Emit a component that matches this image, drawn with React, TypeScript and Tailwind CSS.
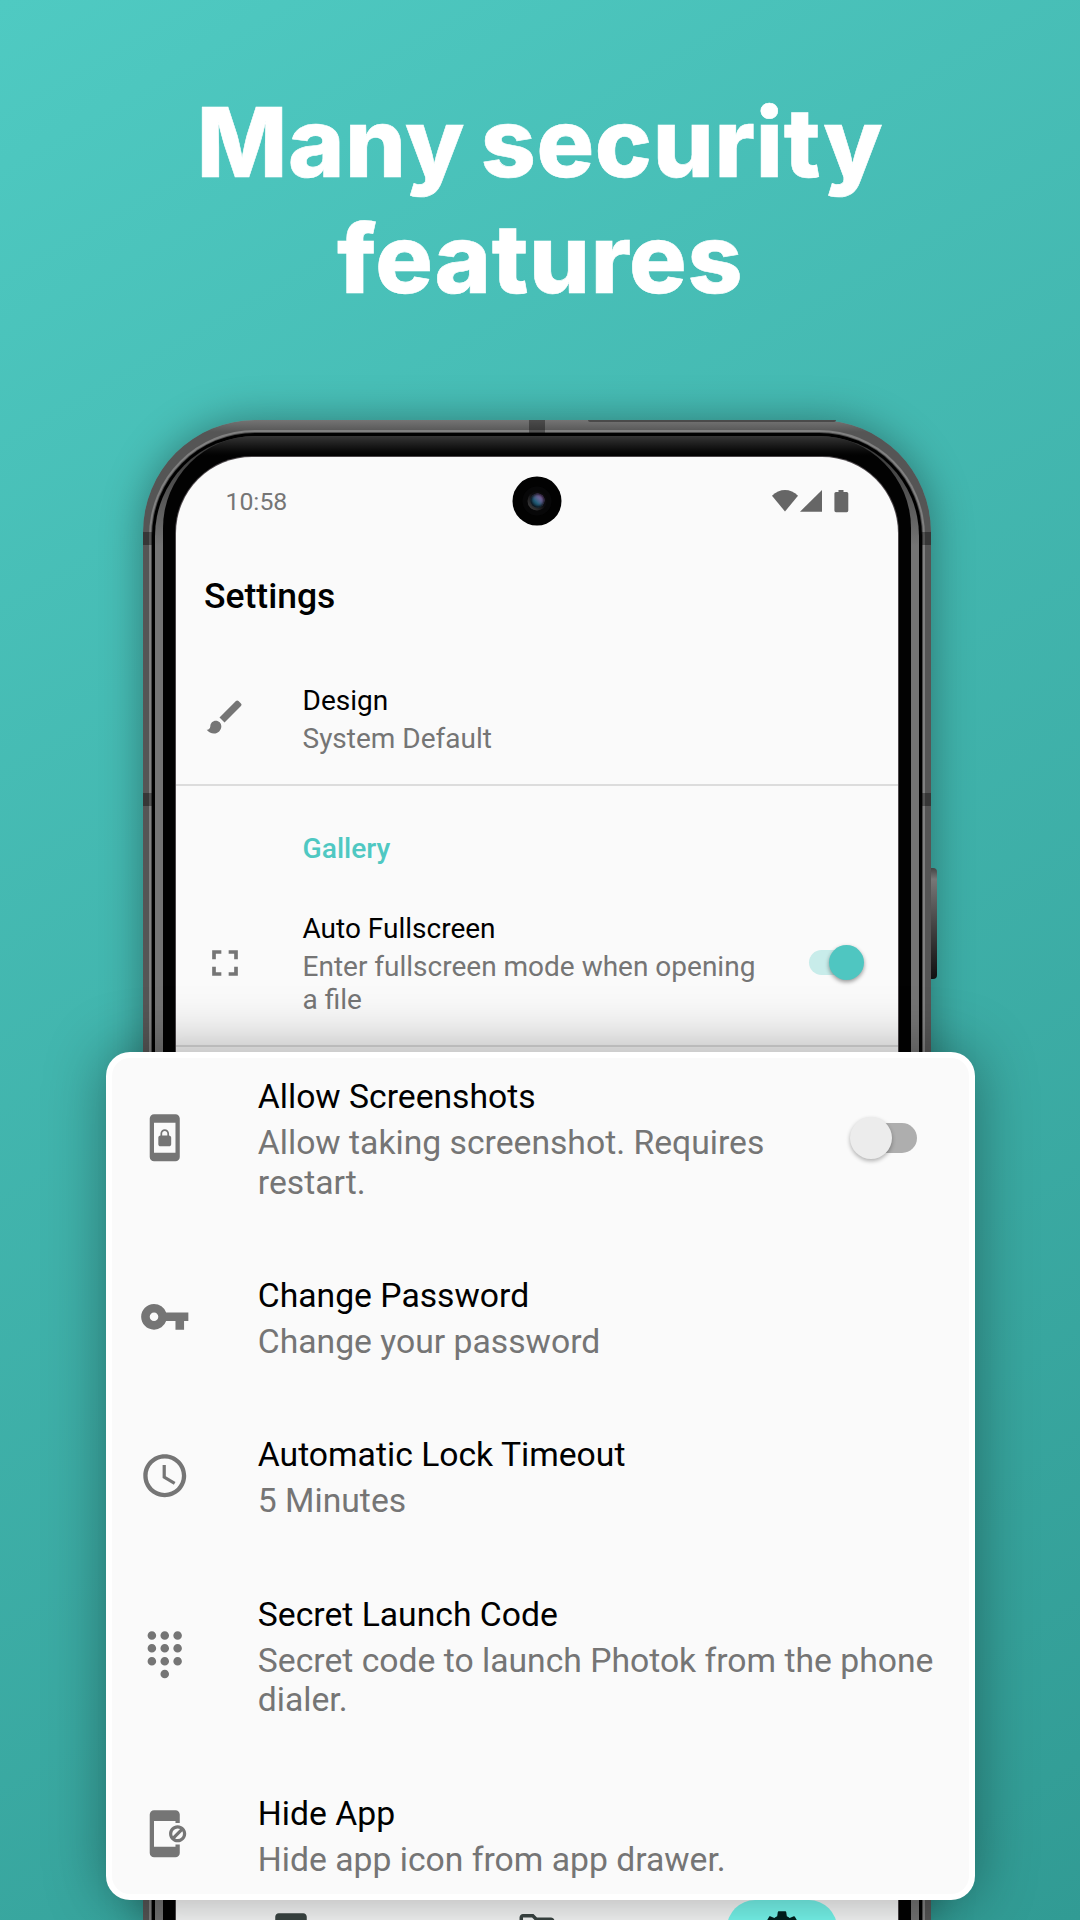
import React from "react";
import {
  MdAccessTime,
  MdAppBlocking,
  MdBrush,
  MdDialpad,
  MdFullscreen,
  MdPhoto,
  MdOutlineFolder,
  MdScreenLockPortrait,
  MdSettings,
  MdVpnKey,
} from "react-icons/md";

type IconType = React.ComponentType<{ className?: string }>;

const items: { icon: IconType; title: string; text: string; height: string; toggle?: boolean }[] = [
  { icon: MdScreenLockPortrait, title: "Allow Screenshots", text: "Allow taking screenshot. Requires restart.", height: "h-[198.8px]", toggle: true },
  { icon: MdVpnKey, title: "Change Password", text: "Change your password", height: "h-[159.4px]" },
  { icon: MdAccessTime, title: "Automatic Lock Timeout", text: "5 Minutes", height: "h-[159.4px]" },
  { icon: MdDialpad, title: "Secret Launch Code", text: "Secret code to launch Photok from the phone dialer.", height: "h-[198.8px]" },
  { icon: MdAppBlocking, title: "Hide App", text: "Hide app icon from app drawer.", height: "h-[159.4px]" },
];

function StatusIcons() {
  return (
    <svg className="h-6 w-[78px]" viewBox="0 0 78 24" fill="#666">
      <path d="M0 6.8C7.5-1.1 18.5-1.1 26 6.8L13 22.5z" />
      <path d="M50 1v21.7H28z" />
      <path d="M66.500 1h5v2h3.200q1.600 0 1.600 1.600v17q0 1.600-1.600 1.600H64q-1.600 0-1.600-1.600v-17Q62.400 3 64 3h2.500z" />
    </svg>
  );
}

function Camera() {
  return (
    <div className="absolute left-[361px] top-[43.500px] flex size-[49px] -translate-x-1/2 -translate-y-1/2 items-center justify-center rounded-full bg-[#020202]">
      <div className="flex size-[29px] items-center justify-center rounded-full bg-[#070708]">
        <div className="flex size-[19px] items-center justify-center rounded-full bg-linear-to-tr from-[#4c4c4c] via-[#0c0c0f] via-55% to-[#0a0a0a]">
          <div className="size-[14px] rounded-full bg-linear-to-tr from-[#0d2f3f] from-10% via-[#24607c] via-40% to-[#a068b8] to-90% shadow-[inset_0_0_3px_1px_#0a0a10]" />
        </div>
      </div>
    </div>
  );
}

function Screen() {
  return (
    <div className="relative flex h-full flex-col overflow-hidden rounded-t-[76px] bg-[#fafafa]">
      <Camera />
      <div className="flex h-[88px] items-center justify-between pl-[49.500px] pr-[48px]">
        <span className="pt-px text-[24.800px] text-[#757575]">10:58</span>
        <StatusIcons />
      </div>
      <h2 className="mt-[30.500px] pl-7 text-[35.500px] leading-10 font-medium text-black">Settings</h2>
      <div className="mt-[52px] flex h-[116.500px] pl-[27px]">
        <MdBrush className="mt-[27px] size-11 text-[#757575]" />
        <div className="ml-[55.500px] mt-4 text-[28px] leading-[33px]">
          <div className="text-black">Design</div>
          <div className="mt-[5px] text-[#757575]">System Default</div>
        </div>
      </div>
      <div className="h-0.5 bg-[#dcdcdc]" />
      <div className="mt-[46px] pl-[126.500px] text-[28.200px] leading-[33px] font-medium text-[#4fc8c2]">Gallery</div>
      <div className="mt-[47px] flex pl-[27px]">
        <MdFullscreen className="mt-[29px] size-11 text-[#757575]" />
        <div className="ml-[55.500px] w-[470px] text-[28px] leading-[33px]">
          <div className="text-black">Auto Fullscreen</div>
          <div className="mt-[5px] text-[#757575]">Enter fullscreen mode when opening a file</div>
        </div>
        <div className="relative ml-[36px] mt-[38px] h-[25px] w-[52px] rounded-full bg-[#c8ecea]">
          <div className="absolute -top-[5px] left-[20px] size-[35px] rounded-full bg-[#4fc6c1] shadow-[0_2px_4px_rgba(0,0,0,0.4)]" />
        </div>
      </div>
      <div className="mt-[29px] h-0.5 bg-[#dcdcdc]" />
      <div className="mt-auto flex h-[20px] items-start bg-[#fafbfb] pl-[94px] text-[#3b4644]">
        <MdPhoto className="mt-[8px] size-[42px] shrink-0" />
        <MdOutlineFolder className="ml-[204px] mt-[7px] size-[42px] shrink-0" />
        <div className="ml-[169px] flex h-[56px] w-[110px] shrink-0 items-center justify-center rounded-full bg-[#78fbf1] text-[#00201e]">
          <MdSettings className="size-[42px]" />
        </div>
      </div>
    </div>
  );
}

function Phone() {
  return (
    <div className="relative ml-[143px] h-[1500px] w-[788px]">
      <div className="absolute left-[788px] top-[448px] h-[111px] w-1.5 rounded-r-sm bg-linear-to-b from-[#444] via-[#777] via-10% to-[#111]" />
      <div className="h-full rounded-t-[112px] bg-linear-to-b from-[#747474] to-[#555] to-[12px] px-1.5 pt-2.5 shadow-[0_0_40px_rgba(0,0,0,0.35)]">
        <div className="h-full rounded-t-[106px] bg-[#808080] px-0.5 pt-[2px]">
          <div className="h-full rounded-t-[104px] bg-[#4a4a4a] px-[1px] pt-[1px]">
            <div className="h-full rounded-t-[103px] bg-black px-[3px] pt-[3px]">
              <div className="h-full rounded-t-[100px] bg-linear-to-b from-[#333] to-[#747474] to-[110px] px-[8px]">
                <div className="h-full rounded-t-[92px] bg-linear-to-b from-[#363636] to-[#020202] to-[20px] px-[12px] pt-[20px]">
                  <div className="h-full rounded-t-[77px] bg-[#4b4649] px-px pt-px">
                    <Screen />
                  </div>
                </div>
              </div>
            </div>
          </div>
        </div>
      </div>
      <div className="absolute left-[386px] top-0 h-[13px] w-[16px] bg-black/35" />
      <div className="absolute left-[445px] top-0 h-[2px] w-[248px] rounded-b-full bg-[#4a4a4a]" />
      <div className="absolute left-0 top-[112px] h-[13px] w-2.5 bg-black/35" />
      <div className="absolute right-0 top-[112px] h-[13px] w-2.5 bg-black/35" />
      <div className="absolute left-0 top-[373px] h-[13px] w-2.5 bg-black/35" />
      <div className="absolute right-0 top-[373px] h-[13px] w-2.5 bg-black/35" />
    </div>
  );
}

function FeatureCard() {
  return (
    <div className="absolute left-[106px] top-[1052px] h-[848px] w-[868.500px] rounded-[24px] bg-white p-1.5 shadow-[0_0_60px_rgba(0,0,0,0.36)]">
      <div className="h-full overflow-hidden rounded-[18px] bg-[#fafafa]">
        <div className="-mt-5">
          {items.map(({ icon: Icon, title, text, height, toggle }) => (
            <div key={title} className={`flex items-center ${height}`}>
              <Icon className="ml-[27px] size-[51.500px] shrink-0 text-[#757575]" />
              <div className="ml-[67.300px] w-[690px] pt-[4.600px] text-[33.700px] leading-[39.400px]">
                <div className="text-black">{title}</div>
                <div className={toggle ? "mt-[6.600px] w-[530px] text-[#757575]" : "mt-[6.600px] text-[#757575]"}>{text}</div>
              </div>
              {toggle && (
                <div className="absolute left-[750px] top-[71px] h-[30px] w-[60.500px] rounded-full bg-[#aeaeae]">
                  <div className="absolute -left-[6px] -top-[6px] size-[42px] rounded-full bg-[#ececec] shadow-[0_2px_4px_rgba(0,0,0,0.3)]" />
                </div>
              )}
            </div>
          ))}
        </div>
      </div>
    </div>
  );
}

export default function App() {
  return (
    <main className="relative h-[1920px] w-[1080px] overflow-hidden bg-linear-[150deg] from-[#4fcac2] to-[#319b94] font-['Roboto',sans-serif]">
      <h1 className="h-[420px] pt-[84px] text-center font-['Inter',sans-serif] text-[96px] leading-[116px] font-[850] tracking-[0.700px] [word-spacing:-6px] text-white [-webkit-text-stroke:0.6px_white]">
        Many security
        <br />
        features
      </h1>
      <Phone />
      <FeatureCard />
    </main>
  );
}
